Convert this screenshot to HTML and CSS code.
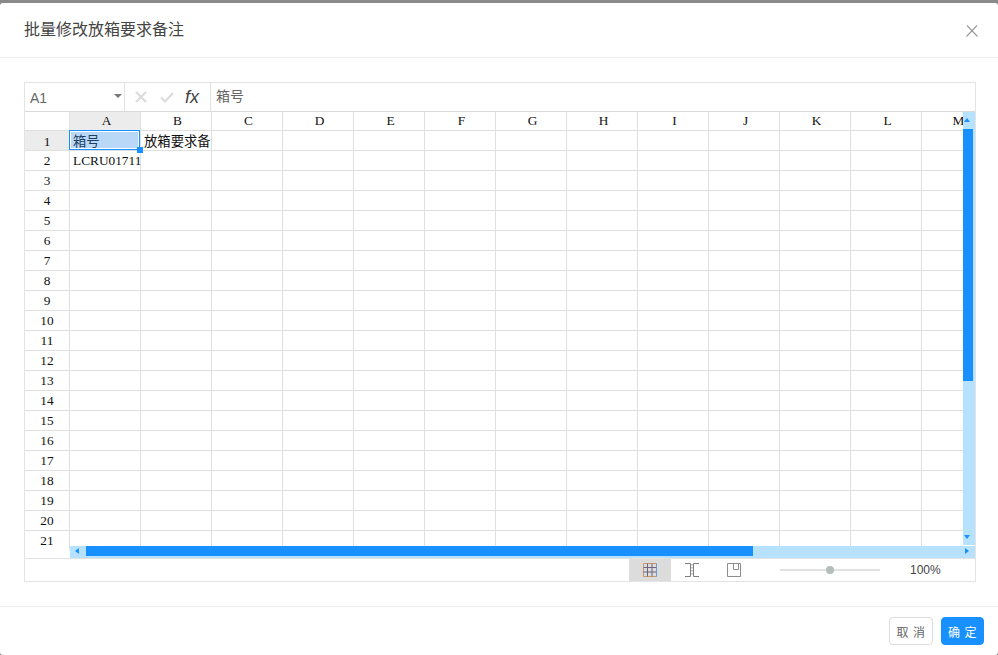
FILE: index.html
```html
<!DOCTYPE html>
<html lang="zh">
<head>
<meta charset="utf-8">
<title>批量修改放箱要求备注</title>
<link rel="stylesheet" href="styles.css">
</head>
<body>
<div class="modal">
  <header class="modal-head">
    <h1 class="modal-title">批量修改放箱要求备注</h1>
    <svg class="close" width="12" height="12" viewBox="0 0 12 12"><path d="M1 .5l10.500 11M11 .5L.5 11.500" stroke="#9a9a9a" stroke-width="1.100" fill="none"/></svg>
  </header>
  <main class="modal-body">
    <div class="sheet">
      <div class="formula-bar">
        <div class="name-box"><span>A1</span><i class="caret"></i></div>
        <div class="formula-tools">
          <svg width="14" height="14" viewBox="0 0 14 14"><path d="M2 2l10 10M12 2L2 12" stroke="#dcdcdc" stroke-width="2.200" fill="none"/></svg>
          <svg width="16" height="14" viewBox="0 0 16 14"><path d="M2 7.500l4 4L14 3" stroke="#dcdcdc" stroke-width="2.200" fill="none"/></svg>
          <span class="fx">fx</span>
        </div>
        <div class="formula-input">箱号</div>
      </div>
      <div class="grid-wrap">
        <table class="grid">
          <thead>
            <tr><th class="corner"></th><th class="sel">A</th><th>B</th><th>C</th><th>D</th><th>E</th><th>F</th><th>G</th><th>H</th><th>I</th><th>J</th><th>K</th><th>L</th><th>M</th></tr>
          </thead>
          <tbody>
            <tr class="first-row"><th class="sel">1</th><td class="active">箱号<i class="handle"></i></td><td>放箱要求备</td><td></td><td></td><td></td><td></td><td></td><td></td><td></td><td></td><td></td><td></td><td></td></tr>
            <tr><th>2</th><td>LCRU01711</td><td></td><td></td><td></td><td></td><td></td><td></td><td></td><td></td><td></td><td></td><td></td><td></td></tr>
            <tr><th>3</th><td></td><td></td><td></td><td></td><td></td><td></td><td></td><td></td><td></td><td></td><td></td><td></td><td></td></tr>
            <tr><th>4</th><td></td><td></td><td></td><td></td><td></td><td></td><td></td><td></td><td></td><td></td><td></td><td></td><td></td></tr>
            <tr><th>5</th><td></td><td></td><td></td><td></td><td></td><td></td><td></td><td></td><td></td><td></td><td></td><td></td><td></td></tr>
            <tr><th>6</th><td></td><td></td><td></td><td></td><td></td><td></td><td></td><td></td><td></td><td></td><td></td><td></td><td></td></tr>
            <tr><th>7</th><td></td><td></td><td></td><td></td><td></td><td></td><td></td><td></td><td></td><td></td><td></td><td></td><td></td></tr>
            <tr><th>8</th><td></td><td></td><td></td><td></td><td></td><td></td><td></td><td></td><td></td><td></td><td></td><td></td><td></td></tr>
            <tr><th>9</th><td></td><td></td><td></td><td></td><td></td><td></td><td></td><td></td><td></td><td></td><td></td><td></td><td></td></tr>
            <tr><th>10</th><td></td><td></td><td></td><td></td><td></td><td></td><td></td><td></td><td></td><td></td><td></td><td></td><td></td></tr>
            <tr><th>11</th><td></td><td></td><td></td><td></td><td></td><td></td><td></td><td></td><td></td><td></td><td></td><td></td><td></td></tr>
            <tr><th>12</th><td></td><td></td><td></td><td></td><td></td><td></td><td></td><td></td><td></td><td></td><td></td><td></td><td></td></tr>
            <tr><th>13</th><td></td><td></td><td></td><td></td><td></td><td></td><td></td><td></td><td></td><td></td><td></td><td></td><td></td></tr>
            <tr><th>14</th><td></td><td></td><td></td><td></td><td></td><td></td><td></td><td></td><td></td><td></td><td></td><td></td><td></td></tr>
            <tr><th>15</th><td></td><td></td><td></td><td></td><td></td><td></td><td></td><td></td><td></td><td></td><td></td><td></td><td></td></tr>
            <tr><th>16</th><td></td><td></td><td></td><td></td><td></td><td></td><td></td><td></td><td></td><td></td><td></td><td></td><td></td></tr>
            <tr><th>17</th><td></td><td></td><td></td><td></td><td></td><td></td><td></td><td></td><td></td><td></td><td></td><td></td><td></td></tr>
            <tr><th>18</th><td></td><td></td><td></td><td></td><td></td><td></td><td></td><td></td><td></td><td></td><td></td><td></td><td></td></tr>
            <tr><th>19</th><td></td><td></td><td></td><td></td><td></td><td></td><td></td><td></td><td></td><td></td><td></td><td></td><td></td></tr>
            <tr><th>20</th><td></td><td></td><td></td><td></td><td></td><td></td><td></td><td></td><td></td><td></td><td></td><td></td><td></td></tr>
            <tr class="last-row"><th>21</th><td></td><td></td><td></td><td></td><td></td><td></td><td></td><td></td><td></td><td></td><td></td><td></td><td></td></tr>
          </tbody>
        </table>
        <div class="vscroll"><i class="tri tri-up"></i><div class="vthumb"></div><i class="tri tri-down"></i></div>
        <div class="hscroll"><i class="tri tri-left"></i><div class="hthumb"></div><i class="tri tri-right"></i></div>
      </div>
      <div class="status-bar">
        <div class="view-btn view-on">
          <svg width="14" height="14" viewBox="0 0 14 14"><path d="M.5.5h13v13H.5z" fill="none" stroke="#c89a6a"/><path d="M.5 4.500h13M.5 9h13M4.500.5v13M9 .5v13" stroke="#6f6480" fill="none"/><path d="M13.500.5v13" stroke="#6a9ad0"/></svg>
        </div>
        <div class="view-btn">
          <svg width="14" height="14" viewBox="0 0 14 14"><path d="M0 .5h5.500v13H0M14 .5H8.500v13H14" stroke="#808080" fill="none"/><path d="M7 1v12" stroke="#c4c4c4" stroke-dasharray="1.500 1.500" stroke-width="2" fill="none"/></svg>
        </div>
        <div class="view-btn">
          <svg width="14" height="14" viewBox="0 0 14 14"><path d="M.5.5h13v13H.5zM6.500.5v6h5V.5" stroke="#8c8c8c" fill="none"/></svg>
        </div>
        <div class="zoom-track"><i class="zoom-knob"></i></div>
        <div class="zoom-value">100%</div>
      </div>
    </div>
  </main>
  <footer class="modal-foot">
    <button class="btn">取 消</button>
    <button class="btn btn-primary">确 定</button>
  </footer>
</div>
</body>
</html>
```
FILE: styles.css
```css
* { box-sizing: border-box; }
html, body { margin: 0; height: 100%; }
body {
  background: #8a8a8a;
  padding-top: 3px;
  overflow: hidden;
  font-family: "Liberation Sans", "Noto Sans CJK SC", sans-serif;
}
.modal {
  height: 652px;
  background: #fff;
  border-radius: 3px;
  display: flex;
  flex-direction: column;
}
.modal-head {
  height: 55px;
  flex: none;
  border-bottom: 1px solid #efefef;
  display: flex;
  align-items: center;
  justify-content: space-between;
  padding: 0 20px 0 24px;
}
.modal-title {
  margin: 0;
  font-size: 16px;
  font-weight: 400;
  color: #444;
  line-height: 24px;
}
.close { display: block; margin-top: 1px; }
.modal-body {
  flex: none;
  height: 548px;
  padding: 24px 22px 0 24px;
}
.sheet {
  width: 952px;
  height: 500px;
  border: 1px solid #e3e3e3;
  display: flex;
  flex-direction: column;
}
.formula-bar {
  height: 29px;
  flex: none;
  display: flex;
  border-bottom: 1px solid #d9d9d9;
}
.name-box {
  width: 100px;
  flex: none;
  border-right: 1px solid #e3e3e3;
  display: flex;
  align-items: center;
  justify-content: space-between;
  padding: 2px 2px 0 5px;
  font-size: 14px;
  color: #666;
}
.caret {
  width: 0;
  height: 0;
  margin-bottom: 4px;
  border: 4px solid transparent;
  border-top: 4px solid #777;
  border-bottom: 0;
}
.formula-tools {
  width: 86px;
  flex: none;
  border-right: 1px solid #e3e3e3;
  display: flex;
  align-items: center;
  padding-left: 9px;
  gap: 11px;
}
.fx {
  margin-left: -1px;
  font: italic 18px "Liberation Sans", sans-serif;
  color: #444;
}
.formula-input {
  flex: 1;
  padding: 0 5px;
  font-size: 14px;
  line-height: 26px;
  color: #666;
}
.grid-wrap {
  position: relative;
  height: 447px;
  flex: none;
  overflow: hidden;
  border-bottom: 1px solid #e3e3e3;
}
.grid {
  border-collapse: separate;
  border-spacing: 0;
  table-layout: fixed;
  width: 968px;
  font-family: "Liberation Serif", "Noto Sans CJK SC", serif;
  font-size: 13.330px;
  color: #111;
}
.grid th, .grid td {
  width: 71px;
  height: 20px;
  padding: 0;
  border-right: 1px solid #e0e0e0;
  border-bottom: 1px solid #e0e0e0;
  font-weight: 400;
  line-height: 19px;
  white-space: nowrap;
}
.grid thead th { height: 19px; padding-left: 3px; line-height: 18px; }
.grid th { text-align: center; }
.grid th:first-child, .grid .corner { width: 45px; padding-left: 0; }
.grid td { padding: 0 0 0 3px; }
.grid .first-row th, .grid .first-row td { padding-top: 2px; line-height: 17px; }
.grid .last-row th { border-bottom-color: transparent; }
.grid th.sel { background: #ececec; }
.grid td.active {
  position: relative;
  background: #b9d8f8;
  color: #1f3f60;
}
.grid td.active::after {
  content: "";
  position: absolute;
  top: -1px;
  left: -1px;
  right: 0;
  bottom: 0;
  border: 1px solid #1890ff;
  box-shadow: inset 0 0 0 1px #fff;
}
.handle {
  position: absolute;
  right: -3px;
  bottom: -3px;
  width: 6px;
  height: 6px;
  background: #1890ff;
  z-index: 1;
}
.vscroll {
  position: absolute;
  top: 0;
  right: 0;
  width: 12px;
  height: 433px;
  background: #b7e2ff;
}
.vthumb {
  position: absolute;
  top: 17px;
  left: 0;
  width: 10px;
  height: 252px;
  background: #1890ff;
}
.hscroll {
  position: absolute;
  left: 45px;
  bottom: 0;
  width: 905px;
  height: 12px;
  background: #b7e2ff;
}
.hthumb {
  position: absolute;
  left: 16px;
  top: 0;
  width: 667px;
  height: 10px;
  background: #1890ff;
}
.tri { position: absolute; width: 0; height: 0; border: 3px solid transparent; }
.tri-up { top: 6px; left: 1px; border-top: 0; border-bottom: 4px solid #1890ff; }
.tri-down { bottom: 6px; left: 1px; border-bottom: 0; border-top: 4px solid #1890ff; }
.tri-left { left: 5px; top: 2px; border-left: 0; border-right: 4px solid #1890ff; }
.tri-right { right: 6px; top: 2px; border-right: 0; border-left: 4px solid #1890ff; }
.status-bar {
  flex: 1;
  display: flex;
  align-items: center;
  padding-left: 604px;
}
.view-btn {
  width: 42px;
  height: 22px;
  display: flex;
  align-items: center;
  justify-content: center;
}
.view-on { background: #dcdcdc; }
.zoom-track {
  position: relative;
  width: 100px;
  height: 2px;
  margin-left: 25px;
  background: #e1e1e1;
}
.zoom-knob {
  position: absolute;
  left: 46px;
  top: -3px;
  width: 8px;
  height: 8px;
  border-radius: 50%;
  background: #b4bdb8;
}
.zoom-value {
  margin-left: 30px;
  font-size: 12px;
  color: #444;
}
.modal-foot {
  flex: 1;
  border-top: 1px solid #efefef;
  display: flex;
  justify-content: flex-end;
  align-items: flex-start;
  gap: 8px;
  padding: 10px 14px 0 0;
}
.btn {
  width: 44px;
  height: 28px;
  padding: 0;
  border: 1px solid #dcdcdc;
  border-radius: 4px;
  background: #fff;
  color: #666;
  font: 12px "Liberation Sans", "Noto Sans CJK SC", sans-serif;
  letter-spacing: .5px;
}
.btn-primary {
  width: 43px;
  border-color: #1890ff;
  background: #1890ff;
  color: #fff;
}
```
